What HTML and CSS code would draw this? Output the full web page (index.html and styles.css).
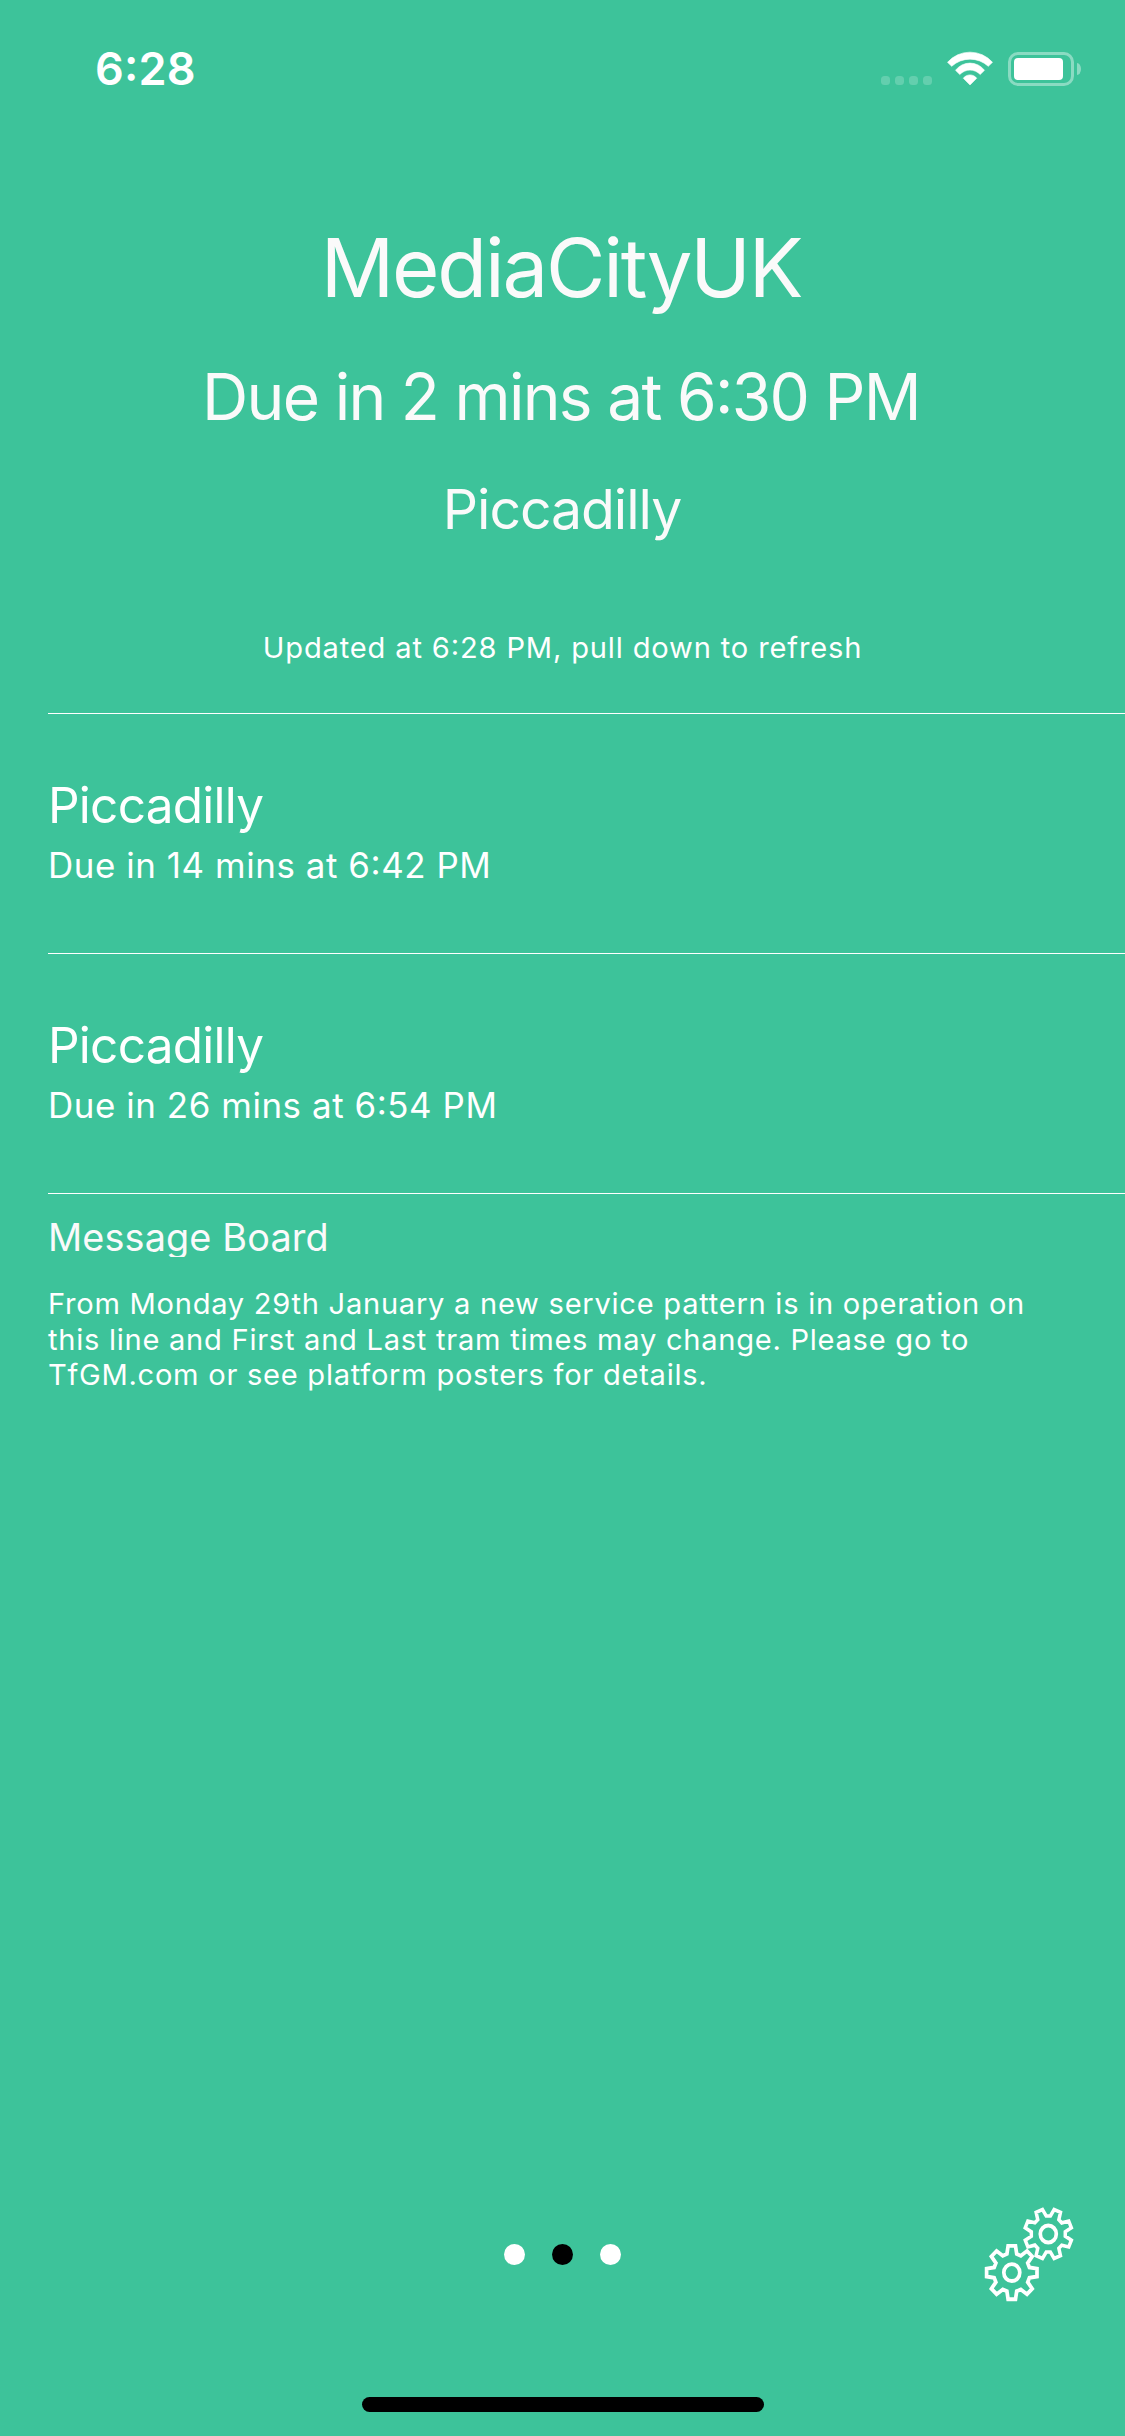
FILE: index.html
```
<!DOCTYPE html>
<html lang="en">
<head>
<meta charset="utf-8">
<title>Tram departures</title>
<link rel="stylesheet" href="styles.css">
</head>
<body>
<div class="screen">
  <header class="status">
    <span class="status-time">6:28</span>
    <div class="status-icons">
      <div class="signal"><i></i><i></i><i></i><i></i></div>
      <svg class="wifi" width="48" height="36" viewBox="0 0 48 36" fill="#fff" stroke="#fff" stroke-width="0.6" stroke-linejoin="round">
        <path d="M1.5 12.3A30 30 0 0 1 46.5 12.3L42.3 16.3A27 27 0 0 0 5.7 16.3Z"/>
        <path d="M9.5 20.3A18.2 18.2 0 0 1 38.5 20.3L34.2 24.5A14 14 0 0 0 13.8 24.5Z"/>
        <path d="M17.3 28.3A8.3 8.3 0 0 1 30.7 28.3L24 34.9Z"/>
      </svg>
      <div class="battery"><div class="battery-case"><div class="battery-level"></div></div><div class="battery-cap"></div></div>
    </div>
  </header>

  <section class="next">
    <h1 class="station">MediaCityUK</h1>
    <p class="due">Due in 2 mins at 6:30 PM</p>
    <p class="destination">Piccadilly</p>
    <p class="updated">Updated at 6:28 PM, pull down to refresh</p>
  </section>

  <ul class="trams">
    <li class="tram">
      <div class="tram-name">Piccadilly</div>
      <div class="tram-due">Due in 14 mins at 6:42 PM</div>
    </li>
    <li class="tram">
      <div class="tram-name">Piccadilly</div>
      <div class="tram-due">Due in 26 mins at 6:54 PM</div>
    </li>
  </ul>

  <section class="board">
    <h2 class="board-title">Message Board</h2>
    <p class="board-text">From Monday 29th January a new service pattern is in operation on<br>this line and First and Last tram times may change. Please go to<br>TfGM.com or see platform posters for details.</p>
  </section>

  <footer class="footer">
    <div class="pages"><i class="page"></i><i class="page page-current"></i><i class="page"></i></div>
    <svg class="settings" width="90" height="96" viewBox="0 0 90 96" fill="none" stroke="#fff" stroke-width="3.7">
      <defs>
        <path id="gear" d="M-4.9-17.6L-3.7-25.2L3.7-25.2L4.9-17.6L9-15.9L15.2-20.4L20.4-15.2L15.9-9L17.6-4.9L25.2-3.7L25.2 3.7L17.6 4.9L15.9 9L20.4 15.2L15.2 20.4L9 15.9L4.9 17.6L3.7 25.2L-3.7 25.2L-4.9 17.6L-9 15.9L-15.2 20.4L-20.4 15.2L-15.9 9L-17.6 4.9L-25.2 3.7L-25.2-3.7L-17.6-4.9L-15.9-9L-20.4-15.2L-15.2-20.4L-9-15.9Z"/>
      </defs>
      <g transform="translate(27.8 65.6) scale(1 1.06)"><use href="#gear"/><circle r="8"/></g>
      <g transform="translate(64.3 27) scale(1 1.06)"><use href="#gear" transform="scale(.935) rotate(22.5)"/><circle r="8"/></g>
    </svg>
  </footer>
  <div class="home-bar"></div>
</div>
</body>
</html>
```
FILE: styles.css
```
* { box-sizing: border-box; margin: 0; padding: 0; }

body {
  background: #3dc39a;
  color: #fff;
  font-family: Inter, "Liberation Sans", sans-serif;
  font-weight: 400;
  font-feature-settings: "calt" 1;
  white-space: nowrap;
}

.screen {
  display: flex;
  flex-direction: column;
  width: 1125px;
  height: 2436px;
  overflow: hidden;
}

.status {
  display: flex;
  justify-content: space-between;
  align-items: flex-start;
  height: 132px;
  padding: 41px 44px 0 95px;
}
.status-time { font-size: 45px; line-height: 55px; font-weight: 560; letter-spacing: .2px; }
.status-icons { display: flex; align-items: flex-start; padding-top: 9px; }
.signal { display: flex; gap: 5px; padding-top: 26px; margin-right: 14px; }
.signal i { width: 9px; height: 9px; border-radius: 3.5px; background: rgba(255, 255, 255, .2); }
.battery { display: flex; align-items: center; gap: 3px; margin: 2px 0 0 14px; }
.battery-case { width: 66px; height: 34px; padding: 3px; border: 3px solid rgba(255, 255, 255, .4); border-radius: 10px; }
.battery-level { width: 49px; height: 22px; border-radius: 4px; background: #fff; }
.battery-cap { width: 4px; height: 12px; border-radius: 0 4px 4px 0 / 0 6px 6px 0; background: rgba(255, 255, 255, .4); }

.next {
  display: flex;
  flex-direction: column;
  align-items: center;
  padding-top: 85px;
  color: #fafafa;
}
.station { padding-right: 3px; font-size: 81.4px; line-height: 101px; font-weight: 370; letter-spacing: -2.2px; }
.due { margin-top: 38px; padding-right: 3px; font-size: 64px; line-height: 81px; font-weight: 370; letter-spacing: -1.69px; }
.destination { margin-top: 38px; padding-right: 1px; font-size: 55.3px; line-height: 67px; letter-spacing: -1.05px; }
.updated { margin-top: 87px; font-size: 29.1px; line-height: 37px; letter-spacing: .84px; color: #fff; }

.trams { margin: 47px 0 0 48px; border-top: 1px solid #fff; list-style: none; }
.tram { height: 240px; padding-top: 61px; border-bottom: 1px solid #fff; }
.tram-name { font-size: 49.5px; line-height: 60px; letter-spacing: -.74px; }
.tram-due { margin-top: 9px; font-size: 34.9px; line-height: 42px; letter-spacing: .57px; }

.board { padding: 20px 0 0 48px; }
.board-title { height: 43px; overflow: hidden; font-size: 37.8px; line-height: 46px; font-weight: 400; letter-spacing: .147px; color: #fafafa; }
.board-text { margin-top: 29px; font-size: 29.1px; line-height: 35.5px; letter-spacing: .73px; }

.footer {
  display: grid;
  grid-template-columns: 1fr auto 1fr;
  align-items: center;
  height: 97px;
  margin-top: auto;
  padding: 0 51px;
}
.pages { grid-column: 2; display: flex; gap: 27px; }
.page { width: 21px; height: 21px; border-radius: 50%; background: #fff; }
.page-current { background: #000; }
.settings { justify-self: end; }

.home-bar {
  width: 402px;
  height: 15px;
  margin: 94px 0 24px 362px;
  border-radius: 8px;
  background: #000;
}
```
